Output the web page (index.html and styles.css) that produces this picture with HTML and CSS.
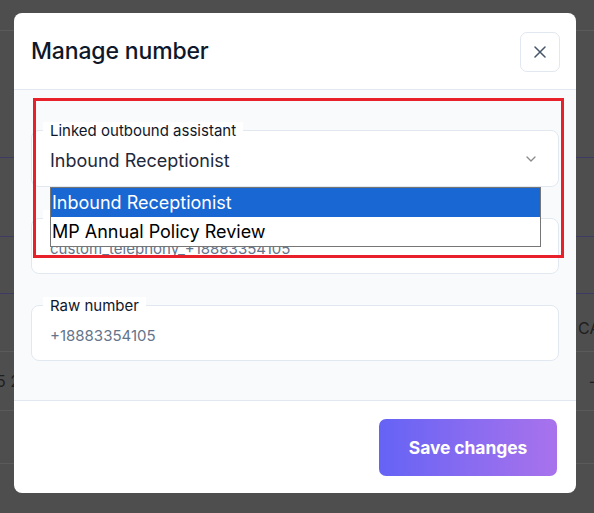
FILE: index.html
```html
<!DOCTYPE html>
<html lang="en">
<head>
<meta charset="utf-8">
<title>Manage number</title>
<link rel="stylesheet" href="styles.css">
</head>
<body>
<div class="backdrop">
  <div class="row r1"></div>
  <div class="row r2"></div>
  <div class="row r3 purple"></div>
  <div class="row r4 purple"></div>
  <div class="row r5"><span class="bg-text cut-right">CAL</span></div>
  <div class="row r6"><span class="bg-text cut-left">5 2</span><span class="bg-text dash">-</span></div>
  <div class="row r7"></div>
  <div class="row r8"></div>
</div>

<div class="modal">
  <div class="modal-header">
    <h2 class="modal-title">Manage number</h2>
    <button class="close-btn" aria-label="Close">
      <svg width="12" height="12" viewBox="0 0 12 12" fill="none" stroke="#475569" stroke-width="1.5" stroke-linecap="round">
        <path d="M1 1L11 11M11 1L1 11"/>
      </svg>
    </button>
  </div>
  <div class="modal-body">
    <div class="field field-select">
      <span class="field-label">Linked outbound assistant</span>
      <span class="field-value dark">Inbound Receptionist</span>
      <svg class="chevron" width="10" height="6" viewBox="0 0 10 6" fill="none" stroke="#8a8a8a" stroke-width="1.3" stroke-linecap="round" stroke-linejoin="round">
        <path d="M1 1L5 5L9 1"/>
      </svg>
    </div>
    <div class="field">
      <span class="field-label">Phone number ID</span>
      <span class="field-value">custom_telephony_+18883354105</span>
    </div>
    <div class="field">
      <span class="field-label">Raw number</span>
      <span class="field-value">+18883354105</span>
    </div>
  </div>
  <div class="modal-footer">
    <button class="save-btn">Save changes</button>
  </div>
</div>

<div class="dropdown-list">
  <div class="option selected">Inbound Receptionist</div>
  <div class="option">MP Annual Policy Review</div>
</div>

<div class="annotation"></div>
</body>
</html>
```

FILE: styles.css
```css
* { box-sizing: border-box; }

html, body {
  margin: 0;
  padding: 0;
  width: 594px;
  height: 513px;
  overflow: hidden;
  background: #4e4e4e;
  font-family: Inter, "Noto Sans", sans-serif;
}

.backdrop {
  display: flex;
  flex-direction: column;
  width: 594px;
  height: 513px;
}

.row {
  display: flex;
  align-items: center;
  border-bottom: 1px solid #5a5a5a;
  flex-shrink: 0;
  position: relative;
}
.row.purple { border-bottom-color: #3d3b63; }
.r1 { height: 31px; border-bottom-color: #5b5b5b; }
.r2 { height: 127px; border-bottom-color: #3d3b63; }
.r3 { height: 79px; }
.r4 { height: 57px; border-bottom-color: #5a5a5a; }
.r5 { height: 58px; }
.r6 { height: 59px; justify-content: space-between; }
.r7 { height: 53px; }
.r8 { flex: 1; border-bottom: none; }

.bg-text {
  font-family: Inter, sans-serif;
  font-size: 16px;
  color: #1f1f1f;
}
.cut-right { padding-left: 578px; padding-top: 10px; white-space: nowrap; }
.cut-left { margin-left: -4px; }
.dash { margin-right: -2px; }

.modal {
  position: absolute;
  left: 14px;
  top: 13px;
  width: 562px;
  height: 480px;
  background: #ffffff;
  border-radius: 8px;
  overflow: hidden;
  display: flex;
  flex-direction: column;
}

.modal-header {
  height: 77px;
  flex-shrink: 0;
  display: flex;
  align-items: center;
  justify-content: space-between;
  padding: 0 16px 0 17px;
  border-bottom: 1px solid #e2e8f0;
}

.modal-title {
  margin: 0;
  font-size: 23px;
  font-weight: 450;
  color: #0f172a;
  letter-spacing: -0.15px;
}

.close-btn {
  width: 40px;
  height: 40px;
  margin-top: 1px;
  border: 1px solid #e2e8f0;
  border-radius: 7px;
  background: #ffffff;
  display: flex;
  align-items: center;
  justify-content: center;
  padding: 0;
}

.modal-body {
  flex: 1;
  background: #f8fafc;
  padding: 40px 17px 0 17px;
  display: flex;
  flex-direction: column;
  gap: 31px;
  border-bottom: 1px solid #e2e8f0;
}

.field {
  position: relative;
  height: 56px;
  background: #ffffff;
  border: 1px solid #e2e8f0;
  border-radius: 8px;
  display: flex;
  align-items: center;
  padding: 4px 18px 0 18px;
}
.field-select { height: 57px; }

.field-label {
  position: absolute;
  left: 11px;
  top: -9px;
  padding: 0 7px;
  background: #ffffff;
  font-size: 15px;
  line-height: 18px;
  color: #0f172a;
}

.field-value {
  font-size: 15px;
  color: #64748b;
  flex: 1;
}
.field-value.dark {
  font-size: 18px;
  color: #1e293b;
}

.chevron { margin-right: 4px; margin-top: -3px; }

.modal-footer {
  height: 92px;
  flex-shrink: 0;
  display: flex;
  align-items: center;
  justify-content: flex-end;
  padding: 0 19px 0 0;
}

.save-btn {
  width: 178px;
  height: 57px;
  border: none;
  border-radius: 7px;
  background: linear-gradient(90deg, #6563f5 0%, #8b6cf0 55%, #a972ec 100%);
  color: #ffffff;
  font-family: Inter, sans-serif;
  font-size: 17.5px;
  font-weight: 700;
  letter-spacing: -0.1px;
}

.dropdown-list {
  position: absolute;
  left: 50px;
  top: 187px;
  width: 491px;
  height: 60px;
  background: #ffffff;
  border: 1px solid #767676;
}

.option {
  height: 29px;
  line-height: 29px;
  padding-left: 1px;
  font-size: 18px;
  color: #000000;
  white-space: nowrap;
}
.option.selected {
  background: #1967d2;
  color: #ffffff;
}

.annotation {
  position: absolute;
  left: 33px;
  top: 98px;
  width: 531px;
  height: 160px;
  border: 3px solid #e8202a;
}
```
